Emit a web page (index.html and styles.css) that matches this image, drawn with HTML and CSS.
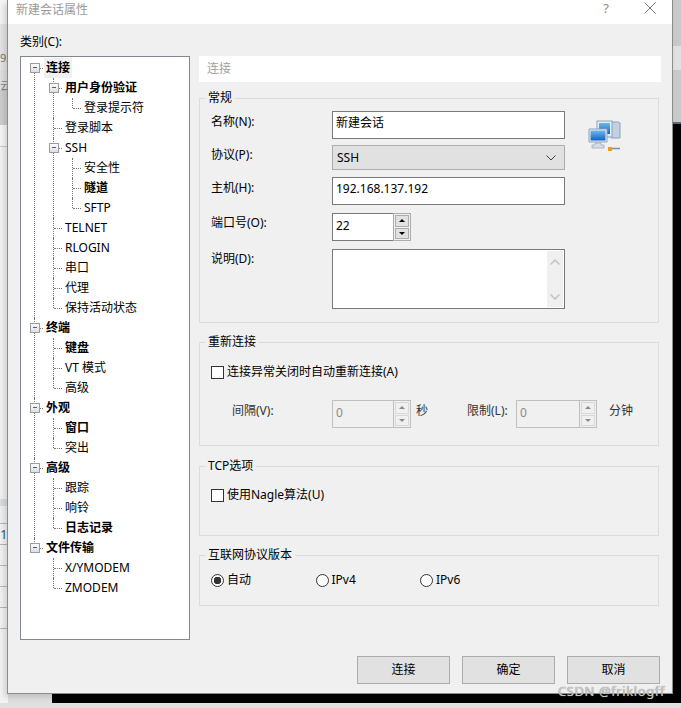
FILE: index.html
```html
<!DOCTYPE html>
<html lang="zh-CN">
  <head>
    <meta charset="UTF-8">
    <meta name="viewport" content="width=device-width, initial-scale=1.0">
    <title>新建会话属性</title>
    <link rel="stylesheet" href="styles.css">
  </head>
  <body>

    <!-- what shows behind the dialog -->
    <div class="back-left">
      <span class="back-num">92</span>
      <span class="back-zh">云</span>
      <span class="back-one">1</span>
    </div>
    <div class="back-right"></div>
    <div class="back-bottom"></div>

    <main class="dialog">
      <header class="titlebar">
        <span class="title">新建会话属性</span>
        <span class="help">?</span>
        <svg class="close" width="12" height="12" viewBox="0 0 12 12"><path d="M.5.5l11 11M11.5.5l-11 11" stroke="#777" fill="none"/></svg>
      </header>

      <div class="body">
        <div class="left">
          <div class="cat-label">类别(C):</div>
          <ul class="tree">
            <li>
              <div class="row"><i class="toggle"></i><span class="txt bold sel">连接</span></div>
              <ul>
                <li>
                  <div class="row"><i class="toggle"></i><span class="txt bold">用户身份验证</span></div>
                  <ul>
                    <li><div class="row"><span class="txt">登录提示符</span></div></li>
                  </ul>
                </li>
                <li><div class="row"><span class="txt">登录脚本</span></div></li>
                <li>
                  <div class="row"><i class="toggle"></i><span class="txt">SSH</span></div>
                  <ul>
                    <li><div class="row"><span class="txt">安全性</span></div></li>
                    <li><div class="row"><span class="txt bold">隧道</span></div></li>
                    <li><div class="row"><span class="txt">SFTP</span></div></li>
                  </ul>
                </li>
                <li><div class="row"><span class="txt">TELNET</span></div></li>
                <li><div class="row"><span class="txt">RLOGIN</span></div></li>
                <li><div class="row"><span class="txt">串口</span></div></li>
                <li><div class="row"><span class="txt">代理</span></div></li>
                <li><div class="row"><span class="txt">保持活动状态</span></div></li>
              </ul>
            </li>
            <li>
              <div class="row"><i class="toggle"></i><span class="txt bold">终端</span></div>
              <ul>
                <li><div class="row"><span class="txt bold">键盘</span></div></li>
                <li><div class="row"><span class="txt">VT 模式</span></div></li>
                <li><div class="row"><span class="txt">高级</span></div></li>
              </ul>
            </li>
            <li>
              <div class="row"><i class="toggle"></i><span class="txt bold">外观</span></div>
              <ul>
                <li><div class="row"><span class="txt bold">窗口</span></div></li>
                <li><div class="row"><span class="txt">突出</span></div></li>
              </ul>
            </li>
            <li>
              <div class="row"><i class="toggle"></i><span class="txt bold">高级</span></div>
              <ul>
                <li><div class="row"><span class="txt">跟踪</span></div></li>
                <li><div class="row"><span class="txt">响铃</span></div></li>
                <li><div class="row"><span class="txt bold">日志记录</span></div></li>
              </ul>
            </li>
            <li>
              <div class="row"><i class="toggle"></i><span class="txt bold">文件传输</span></div>
              <ul>
                <li><div class="row"><span class="txt">X/YMODEM</span></div></li>
                <li><div class="row"><span class="txt">ZMODEM</span></div></li>
              </ul>
            </li>
          </ul>
        </div>

        <section class="panel">
          <div class="panel-head">连接</div>

          <fieldset class="group group-general">
            <legend>常规</legend>
            <div class="form">
              <label class="lbl lbl-first">名称(N):</label>
              <input class="field" type="text" value="新建会话">
              <svg class="net-icon" width="34" height="32" viewBox="0 0 34 32">
                <defs>
                  <linearGradient id="screen" x1="0" y1="0" x2="0" y2="1">
                    <stop offset="0" stop-color="#6db8ee"/>
                    <stop offset="1" stop-color="#1463c8"/>
                  </linearGradient>
                </defs>
                <path d="M23 2h7l2 1v15h-9z" fill="#c3d0e0" stroke="#8ea1b8"/>
                <rect x="9" y="1" width="15" height="16" fill="#e6eef6" stroke="#8ea1b8"/>
                <rect x="11" y="3" width="11" height="11" fill="url(#screen)"/>
                <path d="M1 9h18v13H1z" fill="#e9f0f7" stroke="#8ea1b8"/>
                <rect x="2.500" y="10.500" width="15" height="10" fill="url(#screen)"/>
                <path d="M7 23h6v2h3v3H4v-3h3z" fill="#d5dde6" stroke="#8e9cad" stroke-width=".6"/>
                <path d="M20 28.500h12" stroke="#7f91a6" stroke-width="1.500"/>
                <rect x="20" y="27" width="4" height="4" fill="#f29a1c"/>
              </svg>

              <label class="lbl">协议(P):</label>
              <div class="select">
                <span>SSH</span>
                <svg width="10" height="6" viewBox="0 0 10 6"><path d="M.5.5L5 5 9.500.5" stroke="#444" fill="none"/></svg>
              </div>

              <label class="lbl lbl-mid">主机(H):</label>
              <input class="field" type="text" value="192.168.137.192">

              <label class="lbl">端口号(O):</label>
              <div class="spin spin-port">
                <input class="spin-input" type="text" value="22">
                <div class="spin-btns">
                  <span class="spin-btn"><i class="arrow up"></i></span>
                  <span class="spin-btn"><i class="arrow down"></i></span>
                </div>
              </div>

              <label class="lbl">说明(D):</label>
              <div class="memo">
                <div class="memo-bar">
                  <svg width="10" height="6" viewBox="0 0 10 6"><path d="M.5 5.500L5 1l4.500 4.500" stroke="#c4c4c4" stroke-width="1.500" fill="none"/></svg>
                  <svg width="10" height="6" viewBox="0 0 10 6"><path d="M.5.500L5 5 9.500.5" stroke="#c4c4c4" stroke-width="1.500" fill="none"/></svg>
                </div>
              </div>
            </div>
          </fieldset>

          <fieldset class="group group-reconnect">
            <legend>重新连接</legend>
            <label class="opt"><input class="check" type="checkbox">连接异常关闭时自动重新连接(A)</label>
            <div class="retry">
              <span class="retry-lbl">间隔(V):</span>
              <div class="spin spin-off">
                <input class="spin-input" type="text" value="0" disabled>
                <div class="spin-btns">
                  <span class="spin-btn"><i class="arrow up"></i></span>
                  <span class="spin-btn"><i class="arrow down"></i></span>
                </div>
              </div>
              <span class="unit-sec">秒</span>
              <span class="limit-lbl">限制(L):</span>
              <div class="spin spin-off spin-wide">
                <input class="spin-input" type="text" value="0" disabled>
                <div class="spin-btns">
                  <span class="spin-btn"><i class="arrow up"></i></span>
                  <span class="spin-btn"><i class="arrow down"></i></span>
                </div>
              </div>
              <span class="unit-min">分钟</span>
            </div>
          </fieldset>

          <fieldset class="group group-tcp">
            <legend>TCP选项</legend>
            <label class="opt"><input class="check" type="checkbox">使用Nagle算法(U)</label>
          </fieldset>

          <fieldset class="group group-ip">
            <legend>互联网协议版本</legend>
            <div class="radios">
              <label class="opt radio-item"><input class="radio" type="radio" name="ipver" checked>自动</label>
              <label class="opt radio-item"><input class="radio" type="radio" name="ipver">IPv4</label>
              <label class="opt radio-item"><input class="radio" type="radio" name="ipver">IPv6</label>
            </div>
          </fieldset>
        </section>
      </div>

      <footer class="buttons">
        <button>连接</button>
        <button>确定</button>
        <button>取消</button>
      </footer>
    </main>

    <div class="watermark">CSDN @friklogff</div>
  </body>
</html>
```

FILE: styles.css
```css
* {
  box-sizing: border-box;
}

html, body {
  height: 708px;
}

body {
  margin: 0;
  position: relative;
  overflow: hidden;
  background-color: #e0e0e0;
  font-family: "Noto Sans", "Noto Sans CJK SC", sans-serif;
  font-size: 12px;
  line-height: 20px;
  color: #000000;
}

/* behind the dialog */
.back-left {
  position: absolute;
  left: 0;
  top: 0;
  width: 8px;
  height: 703px;
  background: linear-gradient(to bottom,
    #f6f6f6 0, #f6f6f6 24px,
    #e6e6e6 24px, #e6e6e6 70px,
    #e2e2e2 70px, #e2e2e2 90px,
    #cfcfcf 90px, #cfcfcf 125px,
    #f8f8f8 125px, #f8f8f8 146px,
    #cccccc 146px, #cccccc 147px,
    #f4f4f4 147px, #f4f4f4 499px,
    #dddddd 499px, #dddddd 506px,
    #eef3f6 506px, #eef3f6 523px,
    #b8b8b8 523px, #b8b8b8 524px,
    #f4f4f4 524px, #f4f4f4 544px,
    #b8b8b8 544px, #b8b8b8 545px,
    #f4f4f4 545px, #f4f4f4 565px,
    #b8b8b8 565px, #b8b8b8 566px,
    #f4f4f4 566px, #f4f4f4 586px,
    #b8b8b8 586px, #b8b8b8 587px,
    #f4f4f4 587px, #f4f4f4 607px,
    #b8b8b8 607px, #b8b8b8 608px,
    #f4f4f4 608px, #f4f4f4 628px,
    #b8b8b8 628px, #b8b8b8 629px,
    #f4f4f4 629px);
}

.back-num, .back-zh, .back-one {
  position: absolute;
  left: 0;
  font-size: 11px;
}

.back-num {
  top: 48px;
  color: #777777;
}

.back-zh {
  top: 76px;
  color: #888888;
}

.back-one {
  top: 524px;
  font-size: 13px;
  color: #2f5f8f;
}

.back-right {
  position: absolute;
  left: 673px;
  top: 0;
  width: 8px;
  height: 703px;
  background: linear-gradient(to bottom,
    #c9c9c9 0, #c9c9c9 46px,
    #e0e0e0 46px, #e0e0e0 70px,
    #c9c9c9 70px, #c9c9c9 122px,
    #5d6782 122px, #5d6782 124px,
    #000000 124px);
}

.back-bottom {
  position: absolute;
  left: 52px;
  top: 693px;
  width: 629px;
  height: 10px;
  background-color: #000000;
}

/* dialog */
.dialog {
  position: relative;
  margin-left: 7px;
  width: 666px;
  height: 694px;
  background-color: #f0f0f0;
  border: 1px solid #8c8c8c;
  border-top: none;
  box-shadow: -3px 3px 6px rgba(0, 0, 0, 0.15);
}

.titlebar {
  display: flex;
  align-items: center;
  height: 24px;
  padding: 0 0 4px 8px;
  background-color: #ffffff;
}

.title {
  flex: 1;
  color: #9b9b9b;
}

.help {
  margin: 0 35px 4px 0;
  color: #8a8a8a;
  font-size: 13px;
}

.close {
  margin: 0 16px 4px 0;
}

.body {
  display: flex;
  padding: 10px 0 0 12px;
}

.left {
  width: 179px;
}

.cat-label {
  height: 22px;
  line-height: 16px;
}

.tree, .tree ul {
  list-style: none;
  margin: 0;
  padding: 0;
}

.tree {
  width: 170px;
  height: 584px;
  padding: 1px 0 0 4px;
  background-color: #ffffff;
  border: 1px solid #828790;
}

.tree ul {
  padding-left: 19px;
}

.tree li {
  position: relative;
}

/* vertical guide */
.tree li::before {
  content: "";
  position: absolute;
  left: 9px;
  top: 0;
  bottom: 0;
  border-left: 1px dotted #777777;
}

.tree > li:first-child::before {
  top: 10px;
}

.tree li:last-child::before {
  bottom: auto;
  height: 10px;
}

.tree > li:not(:last-child)::before {
  bottom: 0;
  height: auto;
}

.row {
  position: relative;
  display: flex;
  align-items: center;
  height: 20px;
  padding-left: 19px;
}

/* horizontal guide */
.row::before {
  content: "";
  position: absolute;
  left: 10px;
  top: 10px;
  width: 8px;
  border-top: 1px dotted #777777;
}

.toggle {
  position: absolute;
  z-index: 1;
  left: 5px;
  top: 5px;
  width: 10px;
  height: 10px;
  border: 1px solid #9c9c9c;
  background: linear-gradient(to bottom, #fafafa, #dedede);
}

.toggle::after {
  content: "";
  position: absolute;
  left: 2px;
  top: 3px;
  width: 4px;
  height: 1px;
  background-color: #3f5ea8;
}

.txt {
  position: relative;
  padding: 0 2px;
  white-space: nowrap;
}

.bold {
  font-weight: 700;
}

.sel {
  background-color: #f0f0f0;
}

/* right side */
.panel {
  width: 462px;
  margin-top: 22px;
}

.panel-head {
  height: 26px;
  margin-bottom: 8px;
  padding-left: 8px;
  line-height: 25px;
  background-color: #ffffff;
  color: #a0a0a0;
}

.group {
  width: 460px;
  margin: 0 0 11px 0;
  padding: 0 0 0 11px;
  border: 1px solid #dcdcdc;
  min-width: 0;
}

.group legend {
  margin-left: -6px;
  padding: 0 3px 0 3px;
  height: 16px;
  line-height: 16px;
}

.group-general {
  height: 233px;
}

.group-reconnect {
  height: 112px;
  margin-bottom: 12px;
  padding-top: 12px;
}

.group-tcp {
  height: 78px;
  padding-top: 11px;
}

.group-ip {
  height: 59px;
  margin-bottom: 0;
  padding-top: 7px;
}

.form {
  display: grid;
  grid-template-columns: 121px 233px auto;
  grid-template-rows: 34px 32px 36px 36px 60px;
  padding-top: 5px;
  align-items: start;
}

.lbl {
  grid-column: 1;
}

.lbl-first {
  margin-top: 1px;
}

.lbl-mid {
  margin-top: 1px;
}

.field {
  grid-column: 2;
  display: block;
  width: 233px;
  height: 28px;
  margin: 0;
  padding: 0 3px 6px;
  border: 1px solid #7a7a7a;
  border-radius: 0;
  outline: none;
  background-color: #ffffff;
  font: inherit;
  color: #000000;
}

.net-icon {
  grid-column: 3;
  margin: 9px 0 0 23px;
}

.select {
  grid-column: 2;
  display: flex;
  align-items: center;
  justify-content: space-between;
  height: 25px;
  padding: 0 8px 0 4px;
  background-color: #e1e1e1;
  border: 1px solid #adadad;
}

.spin {
  display: flex;
  height: 28px;
}

.spin-port {
  grid-column: 2;
  width: 79px;
}

.spin-input {
  flex: 1;
  min-width: 0;
  height: 28px;
  margin: 0;
  padding: 0 3px 4px;
  border: 1px solid #7a7a7a;
  border-right: none;
  border-radius: 0;
  outline: none;
  background-color: #ffffff;
  font: inherit;
  color: #000000;
}

.spin-btns {
  display: flex;
  flex-direction: column;
  gap: 1px;
  width: 18px;
  padding: 1px;
  border: 1px solid #adadad;
}

.spin-btn {
  flex: 1;
  display: flex;
  align-items: center;
  justify-content: center;
  background-color: #e1e1e1;
  border: 1px solid #adadad;
}

.arrow {
  width: 0;
  height: 0;
  border-left: 3px solid transparent;
  border-right: 3px solid transparent;
}

.arrow.up {
  border-bottom: 3px solid #000000;
}

.arrow.down {
  border-top: 3px solid #000000;
}

.memo {
  grid-column: 2;
  display: flex;
  justify-content: flex-end;
  height: 60px;
  padding: 1px;
  background-color: #ffffff;
  border: 1px solid #7a7a7a;
}

.memo-bar {
  display: flex;
  flex-direction: column;
  align-items: center;
  justify-content: space-between;
  width: 16px;
  padding: 8px 0 7px;
  background-color: #f0f0f0;
}

.opt {
  display: flex;
  align-items: center;
  height: 20px;
}

.check, .radio {
  appearance: none;
  flex: none;
  width: 13px;
  height: 13px;
  margin: 0 3px 0 0;
  background-color: #ffffff;
  border: 1px solid #333333;
}

.radio {
  border-radius: 50%;
}

.radio:checked {
  background: radial-gradient(circle, #333333 0, #333333 3.500px, #ffffff 4px);
}

.retry {
  display: flex;
  align-items: center;
  height: 28px;
  margin-top: 18px;
  padding-left: 21px;
  color: #333333;
}

.retry > span {
  margin-bottom: 6px;
}

.retry-lbl {
  width: 100px;
}

.unit-sec {
  width: 51px;
  margin-left: 5px;
}

.limit-lbl {
  width: 49px;
}

.unit-min {
  margin-left: 12px;
}

.spin-off {
  width: 79px;
}

.spin-wide {
  width: 81px;
}

.spin-off .spin-input {
  background-color: #f0f0f0;
  border-color: #bfbfbf;
  color: #8a8a8a;
}

.spin-off .spin-btns {
  border-color: #bfbfbf;
}

.spin-off .spin-btn {
  background-color: #f0f0f0;
  border-color: #d8d8d8;
}

.spin-off .arrow.up {
  border-bottom-color: #8a8a8a;
}

.spin-off .arrow.down {
  border-top-color: #8a8a8a;
}

.radios {
  display: flex;
}

.radio-item {
  width: 104.500px;
}

.buttons {
  display: flex;
  gap: 12px;
  justify-content: flex-end;
  margin: 16px 12px 0 0;
}

button {
  width: 93px;
  height: 28px;
  margin: 0;
  padding: 0;
  background-color: #e1e1e1;
  border: 1px solid #adadad;
  border-radius: 0;
  font: inherit;
  color: #000000;
}

.watermark {
  position: absolute;
  right: 16px;
  top: 682px;
  font-size: 13px;
  line-height: 18px;
  letter-spacing: 0.6px;
  color: #c9c9c9;
  text-shadow: 0 0 1px #777777;
}
```
